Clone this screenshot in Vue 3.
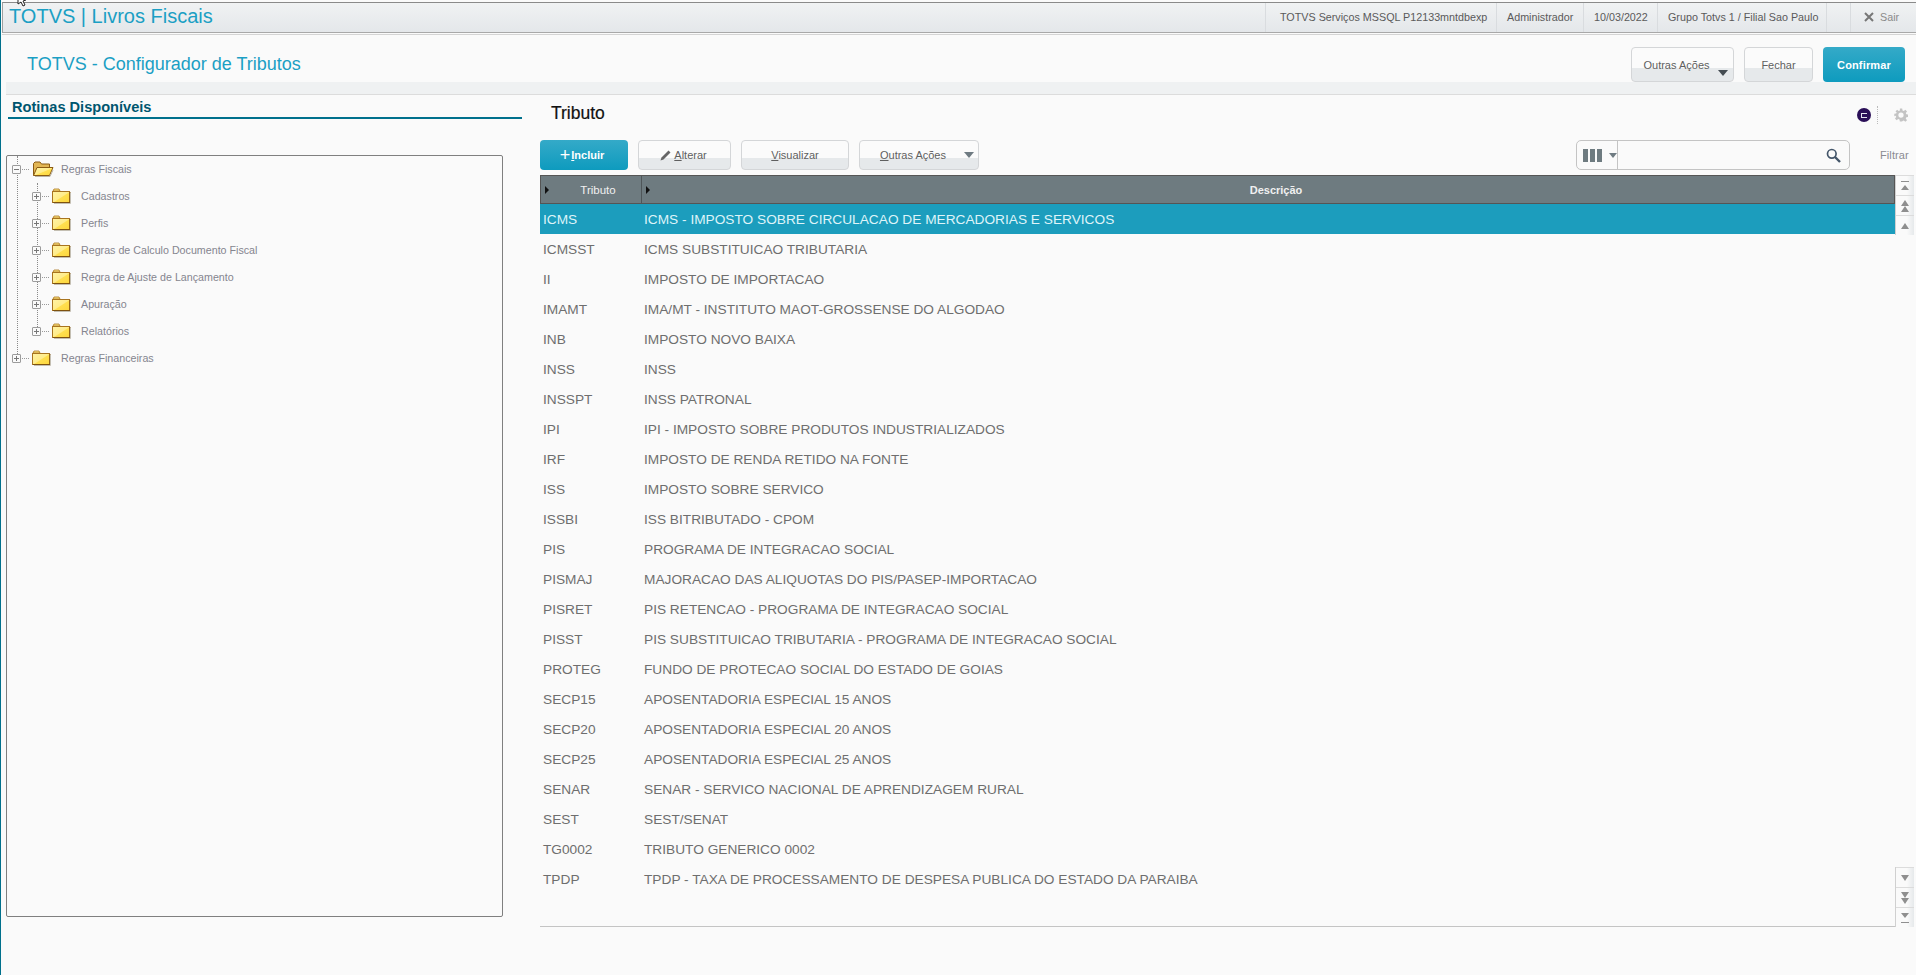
<script setup>
const rows = [
  ['ICMS', 'ICMS - IMPOSTO SOBRE CIRCULACAO DE MERCADORIAS E SERVICOS'],
  ['ICMSST', 'ICMS SUBSTITUICAO TRIBUTARIA'],
  ['II', 'IMPOSTO DE IMPORTACAO'],
  ['IMAMT', 'IMA/MT - INSTITUTO MAOT-GROSSENSE DO ALGODAO'],
  ['INB', 'IMPOSTO NOVO BAIXA'],
  ['INSS', 'INSS'],
  ['INSSPT', 'INSS PATRONAL'],
  ['IPI', 'IPI - IMPOSTO SOBRE PRODUTOS INDUSTRIALIZADOS'],
  ['IRF', 'IMPOSTO DE RENDA RETIDO NA FONTE'],
  ['ISS', 'IMPOSTO SOBRE SERVICO'],
  ['ISSBI', 'ISS BITRIBUTADO - CPOM'],
  ['PIS', 'PROGRAMA DE INTEGRACAO SOCIAL'],
  ['PISMAJ', 'MAJORACAO DAS ALIQUOTAS DO PIS/PASEP-IMPORTACAO'],
  ['PISRET', 'PIS RETENCAO - PROGRAMA DE INTEGRACAO SOCIAL'],
  ['PISST', 'PIS SUBSTITUICAO TRIBUTARIA - PROGRAMA DE INTEGRACAO SOCIAL'],
  ['PROTEG', 'FUNDO DE PROTECAO SOCIAL DO ESTADO DE GOIAS'],
  ['SECP15', 'APOSENTADORIA ESPECIAL 15 ANOS'],
  ['SECP20', 'APOSENTADORIA ESPECIAL 20 ANOS'],
  ['SECP25', 'APOSENTADORIA ESPECIAL 25 ANOS'],
  ['SENAR', 'SENAR - SERVICO NACIONAL DE APRENDIZAGEM RURAL'],
  ['SEST', 'SEST/SENAT'],
  ['TG0002', 'TRIBUTO GENERICO 0002'],
  ['TPDP', 'TPDP - TAXA DE PROCESSAMENTO DE DESPESA PUBLICA DO ESTADO DA PARAIBA'],
]
const children = ['Cadastros', 'Perfis', 'Regras de Calculo Documento Fiscal', 'Regra de Ajuste de Lançamento', 'Apuração', 'Relatórios']
</script>

<template>
  <div class="app">
    <svg class="cursor" width="12" height="8" viewBox="0 0 12 8"><path d="M2 -6 L2 4 L5 2 L7 6 L9 5 L7 1 L10 0 Z" fill="#fff" stroke="#222" stroke-width="1"/></svg>
    <svg width="0" height="0" class="defs">
      <defs>
        <linearGradient id="fy" x1="0" y1="0" x2="1" y2="1">
          <stop offset="0" stop-color="#fff3a6"/><stop offset=".5" stop-color="#ffec8a"/><stop offset=".55" stop-color="#ffdf4f"/><stop offset="1" stop-color="#fdd63c"/>
        </linearGradient>
      </defs>
    </svg>

    <header class="topbar">
      <div class="brand">TOTVS | Livros Fiscais</div>
      <div class="cell c1">TOTVS Serviços MSSQL P12133mntdbexp</div>
      <div class="cell c2">Administrador</div>
      <div class="cell c3">10/03/2022</div>
      <div class="cell c4">Grupo Totvs 1 / Filial Sao Paulo</div>
      <div class="cell c5"></div>
      <div class="cell exit">
        <svg width="10" height="10" viewBox="0 0 10 10"><path d="M1 1 L9 9 M9 1 L1 9" stroke="#777" stroke-width="2"/></svg>
        <span>Sair</span>
      </div>
    </header>

    <section class="pagehead">
      <h1>TOTVS - Configurador de Tributos</h1>
      <div class="actions">
        <button class="btn lg others">Outras Ações<i class="tri corner"></i></button>
        <button class="btn lg close">Fechar</button>
        <button class="btn lg primary confirm">Confirmar</button>
      </div>
    </section>
    <div class="band"></div>

    <main class="main">
      <aside class="left">
        <h2>Rotinas Disponíveis</h2>
        <div class="tree">
          <i class="vline v1"></i>
          <i class="vline v2"></i>
          <div class="node">
            <span class="exp minus"></span><i class="dots"></i>
            <svg class="folder" width="22" height="16" viewBox="0 0 22 16">
              <path d="M1.5 14.5 L1.5 2.5 L3 1 L8 1 L9.5 3 L17.5 3 L17.5 6" fill="#e2b654" stroke="#8a5a12"/>
              <path d="M1.5 14.5 L5 6.5 L21 6.5 L17.5 14.5 Z" fill="url(#fy)" stroke="#8a5a12"/>
              <path d="M3 15.5 H18 L21 9" fill="none" stroke="#b9b3a4"/>
            </svg>
            <span class="label">Regras Fiscais</span>
          </div>
          <div v-for="c in children" :key="c" class="node child">
            <span class="exp plus"></span><i class="dots"></i>
            <svg class="folder" width="19" height="16" viewBox="0 0 19 16">
              <path d="M1 3 L2 1 L7 1 L8 3 Z" fill="#ffe680" stroke="#a8741f" stroke-width=".8"/>
              <rect x=".5" y="3.5" width="17" height="11" fill="url(#fy)" stroke="#a8741f"/>
              <path d="M1 14.5 H18 V4" fill="none" stroke="#7e5210" stroke-width="1"/>
              <path d="M2 15.5 H18.5 V5" fill="none" stroke="#c4bfb2" stroke-width="1"/>
            </svg>
            <span class="label wide">{{ c }}</span>
          </div>
          <div class="node">
            <span class="exp plus"></span><i class="dots"></i>
            <svg class="folder" width="19" height="16" viewBox="0 0 19 16">
              <path d="M1 3 L2 1 L7 1 L8 3 Z" fill="#ffe680" stroke="#a8741f" stroke-width=".8"/>
              <rect x=".5" y="3.5" width="17" height="11" fill="url(#fy)" stroke="#a8741f"/>
              <path d="M1 14.5 H18 V4" fill="none" stroke="#7e5210" stroke-width="1"/>
              <path d="M2 15.5 H18.5 V5" fill="none" stroke="#c4bfb2" stroke-width="1"/>
            </svg>
            <span class="label root2">Regras Financeiras</span>
          </div>
        </div>
      </aside>

      <section class="right">
        <div class="righthead">
          <h3>Tributo</h3>
          <div class="tools">
            <span class="badge"><b></b></span>
            <i class="sep"></i>
            <svg class="gear" width="14" height="14" viewBox="0 0 24 24"><path fill="#c4c4c4" fill-rule="evenodd" d="M10 1h4l.6 3.2 2.2.9L19.5 3l2.8 2.8-2.1 2.7.9 2.2 3.2.6v4l-3.2.6-.9 2.2 2.1 2.7-2.8 2.8-2.7-2.1-2.2.9L14 23h-4l-.6-3.2-2.2-.9-2.7 2.1-2.8-2.8 2.1-2.7-.9-2.2L.5 14v-4l3.2-.6.9-2.2L2.5 5.8 5.3 3l2.7 2.1 2.2-.9zM12 7.5a4.5 4.5 0 1 0 0 9 4.5 4.5 0 0 0 0-9z"/></svg>
          </div>
        </div>

        <div class="toolbar">
          <button class="btn primary incl"><span class="plus-sign">+</span><span><u>I</u>ncluir</span></button>
          <button class="btn alt">
            <svg width="12" height="12" viewBox="0 0 12 12"><path d="M0.5 11.5 L1.5 8.5 L8.5 1.5 L10.5 3.5 L3.5 10.5 Z" fill="#666"/></svg><span><u>A</u>lterar</span>
          </button>
          <button class="btn view"><span><u>V</u>isualizar</span></button>
          <button class="btn more"><span><u>O</u>utras Ações</span><i class="tri"></i></button>
          <div class="search">
            <div class="cols"><i></i><i></i><i></i><em class="tri"></em></div>
            <div class="field">
              <svg width="15" height="15" viewBox="0 0 15 15"><circle cx="5.8" cy="5.8" r="4.3" fill="none" stroke="#44566a" stroke-width="1.7"/><path d="M9 9 L14 14" stroke="#44566a" stroke-width="2.4"/></svg>
            </div>
          </div>
          <span class="filter">Filtrar</span>
        </div>

        <div class="gridwrap">
          <div class="grid">
            <div class="ghead">
              <div class="gh h1"><i class="caret"></i><span>Tributo</span></div>
              <div class="gh h2"><i class="caret"></i><b>Descrição</b></div>
            </div>
            <div v-for="(r, i) in rows" :key="r[0]" class="row" :class="{ sel: i === 0 }">
              <span class="code">{{ r[0] }}</span><span class="desc">{{ r[1] }}</span>
            </div>
          </div>
          <div class="scroll">
            <div class="sbtns">
              <div class="sb"><svg width="8" height="10" viewBox="0 0 8 10"><path d="M0 0 H8 V1 H0 Z M4 4 L8 9 H0 Z" fill="#8f8f8f"/></svg></div>
              <div class="sb"><svg width="8" height="12" viewBox="0 0 8 12"><path d="M4 0 L8 6 H0 Z M4 6 L8 12 H0 Z" fill="#8f8f8f"/></svg></div>
              <div class="sb"><svg width="8" height="6" viewBox="0 0 8 6"><path d="M4 0 L8 6 H0 Z" fill="#8f8f8f"/></svg></div>
            </div>
            <div class="sbtns down">
              <div class="sb"><svg width="8" height="6" viewBox="0 0 8 6"><path d="M0 0 H8 L4 6 Z" fill="#8f8f8f"/></svg></div>
              <div class="sb"><svg width="8" height="12" viewBox="0 0 8 12"><path d="M0 0 H8 L4 6 Z M0 6 H8 L4 12 Z" fill="#8f8f8f"/></svg></div>
              <div class="sb"><svg width="8" height="10" viewBox="0 0 8 10"><path d="M0 0 H8 L4 5 Z M0 9 H8 V10 H0 Z" fill="#8f8f8f"/></svg></div>
            </div>
          </div>
        </div>
      </section>
    </main>
  </div>
</template>

<style>
html, body { margin: 0; background: #fafafa; }
</style>

<style scoped>
* { box-sizing: border-box; }
.app {
  position: relative;
  width: 1916px;
  height: 975px;
  overflow: hidden;
  display: flex;
  flex-direction: column;
  padding-top: 2px;
  background: #fafafa;
  border-left: 1px solid #00708c;
  font-family: "Liberation Sans", Arial, sans-serif;
  color: #6b6b6b;
}
.cursor { position: absolute; left: 15px; top: 0; }
.defs { position: absolute; }

/* top bar */
.topbar {
  display: flex;
  align-items: stretch;
  height: 31px;
  margin-left: 1px;
  border-top: 1px solid #8a8a8a;
  border-left: 1px solid #a0a0a0;
  border-bottom: 1px solid #a8a8a8;
  box-shadow: 0 1px 0 #fafafa, 0 2px 0 #d4d4d4;
  background: linear-gradient(#f0f2f3, #e4e7ea);
}
.brand { flex: 1; padding-left: 6px; font-size: 20px; line-height: 27px; color: #1b9fc4; }
.cell {
  display: flex;
  align-items: center;
  font-size: 10.75px;
  color: #5a5a5a;
  padding-bottom: 2px;
  border-left: 1px solid #d9dcdf;
  white-space: nowrap;
}
.c1 { width: 231px; padding-left: 14px; }
.c2 { width: 87px; padding-left: 10px; }
.c3 { width: 74px; padding-left: 10px; }
.c4 { width: 169px; padding-left: 10px; }
.c5 { width: 24px; }
.exit { width: 66px; padding-left: 13px; gap: 6px; color: #8a8a8a; }

/* page header */
.pagehead {
  display: flex;
  justify-content: space-between;
  align-items: flex-end;
  height: 49px;
  padding: 0 11px 0 26px;
}
.pagehead h1 {
  margin: 0 0 6px;
  font-size: 18px;
  font-weight: 400;
  line-height: 24px;
  color: #1b9fc4;
}
.actions { display: flex; gap: 10px; }
.band {
  height: 13px;
  margin-left: 5px;
  background: #eff1f2;
  border-bottom: 1px solid #dcdcdc;
}

.btn {
  position: relative;
  display: inline-flex;
  align-items: center;
  justify-content: center;
  height: 30px;
  padding: 0;
  border: 1px solid #d4d6d8;
  border-radius: 4px;
  background: linear-gradient(#fbfbfb 0 60%, #e6e9eb 60% 100%);
  font: 11px "Liberation Sans", Arial, sans-serif;
  color: #5f5f5f;
}
.btn.lg { height: 35px; }
.btn.lg.others { width: 103px; padding-right: 12px; }
.btn.lg.close { width: 69px; }
.btn.lg.confirm { width: 82px; letter-spacing: .15px; }
.btn.primary {
  border: 0;
  background: linear-gradient(#34aac8, #0e9bbe);
  color: #fff;
  font-weight: 700;
}
.tri {
  display: block;
  width: 0;
  height: 0;
  border-left: 5px solid transparent;
  border-right: 5px solid transparent;
  border-top: 6px solid #6f7b82;
}
.tri.corner { position: absolute; right: 5px; bottom: 5px; border-top-color: #444c52; }

/* main */
.main { flex: 1; display: flex; min-height: 0; }
.left { width: 539px; padding: 5px 0 0 5px; }
.left h2 {
  width: 514px;
  height: 19px;
  margin: 0 0 0 2px;
  padding-left: 4px;
  font-size: 14.6px;
  line-height: 15px;
  color: #00566f;
  border-bottom: 2px solid #00708c;
}
.tree {
  position: relative;
  width: 497px;
  height: 762px;
  margin-top: 36px;
  border: 1px solid #7f7f7f;
  border-radius: 2px;
  display: flex;
  flex-direction: column;
  gap: 11px;
}
.vline { position: absolute; border-left: 1px dotted #8a8a8a; }
.v1 { left: 10px; top: 0; height: 202px; }
.v2 { left: 30px; top: 27px; height: 148px; }
.node { position: relative; display: flex; align-items: center; height: 16px; margin-top: 5px; padding-left: 5px; }
.node + .node { margin-top: 0; }
.child { padding-left: 25px; }
.exp {
  position: relative;
  width: 9px;
  height: 9px;
  background: #fafafa;
  border: 1px solid #9c9c9c;
  border-radius: 1px;
}
.exp::before { content: ""; position: absolute; left: 1px; right: 1px; top: 3px; height: 1px; background: #777; }
.plus::after { content: ""; position: absolute; top: 1px; bottom: 1px; left: 3px; width: 1px; background: #777; }
.dots { width: 7px; margin: 0 2px 0 1px; border-top: 1px dotted #999; }
.folder { flex: none; margin-left: 1px; }
.label { margin-left: 7px; font-size: 10.7px; color: #85858f; white-space: nowrap; }
.label.wide { margin-left: 10px; }
.label.root2 { margin-left: 10px; }

.right { flex: 1; min-width: 0; display: flex; flex-direction: column; }
.righthead {
  display: flex;
  justify-content: space-between;
  align-items: center;
  height: 45px;
  padding: 0 8px 9px 11px;
}
.righthead h3 { margin: 0; font-size: 17.5px; font-weight: 400; color: #111; -webkit-text-stroke: .2px #111; }
.tools { display: flex; align-items: center; margin-top: 4px; }
.badge {
  display: flex;
  align-items: center;
  justify-content: center;
  width: 14px;
  height: 14px;
  border-radius: 50%;
  background: #2a0f57;
}
.badge b { width: 6px; height: 5px; border: 1px solid #e4e4f0; border-right: 0; }
.sep { height: 18px; margin: 0 16px 0 6px; border-left: 1px dotted #bbb; }

.toolbar { display: flex; align-items: center; height: 30px; flex: none; }
.incl { width: 88px; font-size: 11px; padding-right: 4px; }
.plus-sign { font-size: 18px; font-weight: 400; line-height: 16px; margin-right: 1px; }
.alt { width: 93px; margin-left: 10px; gap: 2px; padding-right: 2px; }
.view { width: 108px; margin-left: 10px; }
.more { width: 120px; margin-left: 10px; padding-right: 4px; justify-content: flex-end; gap: 18px; }
.search {
  display: flex;
  width: 274px;
  height: 30px;
  margin-left: 597px;
  border: 1px solid #c4c4c4;
  border-radius: 5px;
}
.cols {
  display: flex;
  align-items: center;
  width: 41px;
  padding-left: 6px;
  gap: 2px;
  border-right: 1px solid #c4c4c4;
}
.cols i { width: 5px; height: 13px; background: #6e7b80; }
.cols .tri { border-left-width: 4px; border-right-width: 4px; border-top-width: 5px; margin-left: 5px; }
.field { flex: 1; display: flex; align-items: center; justify-content: flex-end; padding-right: 8px; }
.filter { margin-left: 30px; font-size: 11px; color: #8a8a92; letter-spacing: .1px; }

.gridwrap { flex: none; display: flex; height: 752px; margin-top: 5px; }
.grid { width: 1355px; border-bottom: 1px solid #c4c4c4; }
.ghead { display: flex; height: 29px; background: #6e7b80; border: 1px solid #555; }
.gh { position: relative; display: flex; align-items: center; justify-content: center; font-size: 11px; color: #f0f0f0; }
.h1 { width: 101px; padding-left: 14px; border-right: 1px solid #4f5659; }
.h1 span { font-size: 11.5px; }
.h2 { flex: 1; padding-left: 16px; }
.caret {
  position: absolute;
  left: 4px;
  top: 10px;
  width: 0;
  height: 0;
  border-top: 4px solid transparent;
  border-bottom: 4px solid transparent;
  border-left: 4px solid #111;
}
.row { display: flex; align-items: center; height: 30px; font-size: 13.7px; color: #6e6e6e; }
.row.sel { background: #1c9dbd; color: #dff4f9; }
.code { width: 105px; padding-left: 3px; }
.desc { white-space: nowrap; margin-left: -1px; }
.scroll { flex: 1; display: flex; flex-direction: column; justify-content: space-between; padding-right: 2px; }
.sbtns { height: 60px; border-left: 1px solid #d0d0d0; }
.sb {
  display: flex;
  align-items: center;
  justify-content: center;
  height: 20px;
  border-top: 1px solid #dcdcdc;
  background: linear-gradient(90deg, #fafafa 0 60%, #e6e9eb 100%);
}
</style>
